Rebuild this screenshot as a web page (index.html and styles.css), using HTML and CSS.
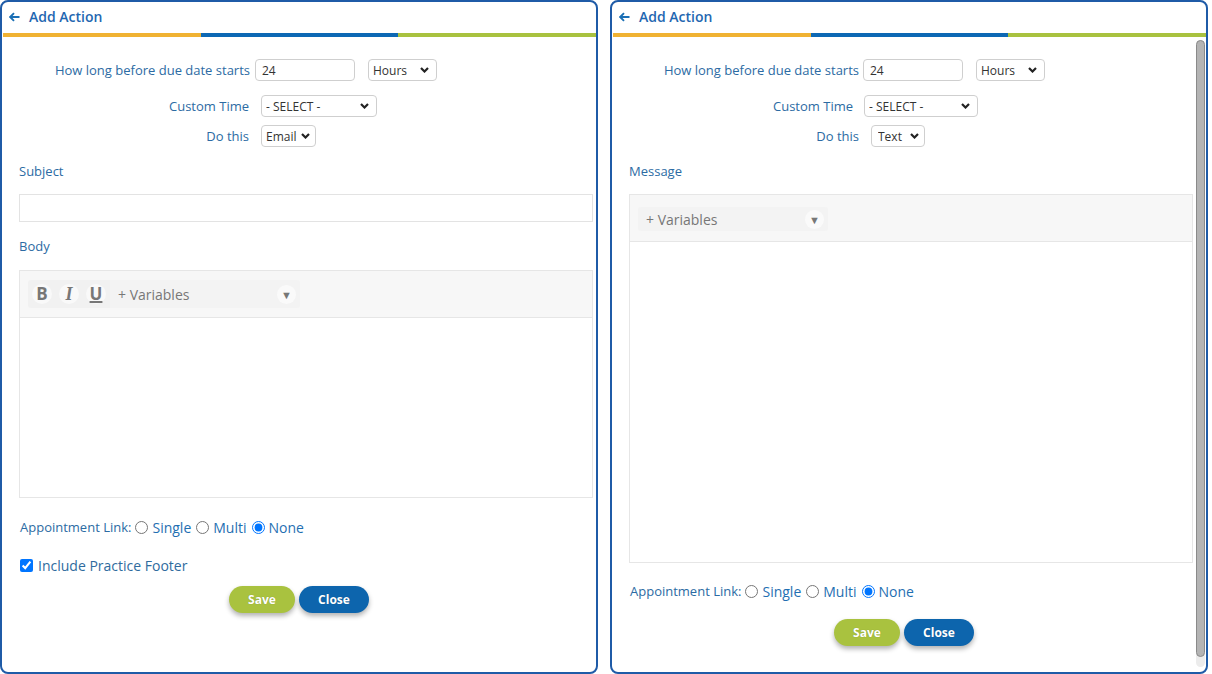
FILE: index.html
```html
<!DOCTYPE html>
<html>
<head>
	<meta charset="utf-8">
	<title>Add Action</title>
	<link rel="stylesheet" href="styles.css">
</head>
<body>
	<div class="panel">
		<div class="panel-head">
			<svg class="back" width="11" height="10" viewBox="0 0 11 10"><path d="M10.5 5H1.5M5 1.2L1.2 5 5 8.8" fill="none" stroke="#1a6fb5" stroke-width="1.9"/></svg>
			<span>Add Action</span>
		</div>
		<div class="stripe"><span class="orange"></span><span class="blue"></span><span class="green"></span></div>
		<div class="panel-body">
			<div class="content">
				<div class="form">
					<div class="row row1">
						<label class="lbl">How long before due date starts</label>
						<input type="text" class="num" value="24">
						<select class="sel unit"><option>Hours</option></select>
					</div>
					<div class="row row2">
						<label class="lbl">Custom Time</label>
						<select class="sel custom"><option>- SELECT -</option></select>
					</div>
					<div class="row row3">
						<label class="lbl">Do this</label>
						<select class="sel action"><option>Email</option></select>
					</div>
					<div class="field-label">Subject</div>
					<input type="text" class="subject">
					<div class="field-label body-label">Body</div>
					<div class="editor email-editor">
						<div class="toolbar">
							<div class="fmt">
								<span class="fbtn b">B</span>
								<span class="fbtn i">I</span>
								<span class="fbtn u">U</span>
							</div>
							<div class="vars big"><span>+ Variables</span><span class="caret">&#9660;</span></div>
						</div>
						<div class="editor-area"></div>
					</div>
					<div class="link-row">
						<span class="link-lbl">Appointment Link:</span>
						<label class="opt"><input type="radio" name="l1">Single</label>
						<label class="opt"><input type="radio" name="l1">Multi</label>
						<label class="opt"><input type="radio" name="l1" checked>None</label>
					</div>
					<label class="footer-check"><input type="checkbox" checked>Include Practice Footer</label>
				</div>
				<div class="actions email-actions">
					<button class="btn save">Save</button>
					<button class="btn close">Close</button>
				</div>
			</div>
		</div>
	</div>

	<div class="panel text-panel">
		<div class="panel-head">
			<svg class="back" width="11" height="10" viewBox="0 0 11 10"><path d="M10.5 5H1.5M5 1.2L1.2 5 5 8.8" fill="none" stroke="#1a6fb5" stroke-width="1.9"/></svg>
			<span>Add Action</span>
		</div>
		<div class="stripe"><span class="orange"></span><span class="blue"></span><span class="green"></span></div>
		<div class="panel-body">
			<div class="content">
				<div class="form">
					<div class="row row1">
						<label class="lbl">How long before due date starts</label>
						<input type="text" class="num" value="24">
						<select class="sel unit"><option>Hours</option></select>
					</div>
					<div class="row row2">
						<label class="lbl">Custom Time</label>
						<select class="sel custom"><option>- SELECT -</option></select>
					</div>
					<div class="row row3">
						<label class="lbl">Do this</label>
						<select class="sel action text"><option>Text</option></select>
					</div>
					<div class="field-label">Message</div>
					<div class="editor text-editor">
						<div class="toolbar">
							<div class="vars"><span>+ Variables</span><span class="caret">&#9660;</span></div>
						</div>
						<div class="editor-area"></div>
					</div>
					<div class="link-row text-link">
						<span class="link-lbl">Appointment Link:</span>
						<label class="opt"><input type="radio" name="l2">Single</label>
						<label class="opt"><input type="radio" name="l2">Multi</label>
						<label class="opt"><input type="radio" name="l2" checked>None</label>
					</div>
				</div>
				<div class="actions text-actions">
					<button class="btn save">Save</button>
					<button class="btn close">Close</button>
				</div>
			</div>
			<div class="scrollbar"><div class="thumb"></div></div>
		</div>
	</div>
</body>
</html>
```

FILE: styles.css
```css
*{box-sizing: border-box;}
body{margin: 0;height: 674px;overflow: hidden;display: flex;gap: 12px;background-color: #fff;font-family: 'Open Sans', sans-serif;color: #2c6ba3;}
.panel{width: 598px;height: 674px;border: 2px solid #1f5ba7;border-radius: 8px;display: flex;flex-direction: column;overflow: hidden;background-color: #fff;}
.panel-head{height: 31px;display: flex;align-items: center;gap: 9px;padding: 0 0 2px 7px;font-size: 14px;font-weight: 600;color: #1f67b1;}
.back{display: block;}
.stripe{display: flex;height: 4px;margin-left: 1px;}
.stripe span{flex: 1;}
.orange{background-color: #f0b232;}
.blue{background-color: #0d68b4;}
.green{background-color: #a9c23f;}
.panel-body{flex: 1;display: flex;min-height: 0;}
.content{flex: 1;display: flex;flex-direction: column;}
.form{padding: 0 3px 0 17px;display: flex;flex-direction: column;}

.row{display: flex;align-items: center;font-size: 13px;}
.row1{margin-top: 22px;}
.row2{margin-top: 14px;}
.row3{margin-top: 8px;}
.lbl{text-align: right;white-space: nowrap;}
.row1 .lbl{width: 231px;margin-right: 5px;}
.row2 .lbl, .row3 .lbl{width: 230px;margin-right: 12px;}
.text-panel .row1 .lbl{width: 230px;margin-right: 4px;}
.text-panel .row2 .lbl{width: 224px;margin-right: 11px;}
.num, .sel{height: 22px;border: 1px solid #cfcfcf;border-radius: 4px;font-family: inherit;font-size: 12px;color: #333;background-color: #fff;outline: none;}
.num{width: 100px;padding: 0 6px;}
.sel{appearance: none;-webkit-appearance: none;padding: 0 18px 0 4px;background-image: url("data:image/svg+xml;utf8,<svg xmlns='http://www.w3.org/2000/svg' width='9' height='6'><path d='M1 1l3.5 3.5L8 1' fill='none' stroke='%23222' stroke-width='2.2'/></svg>");background-repeat: no-repeat;background-position: right 7px center;}
.unit{width: 69px;margin-left: 13px;}
.custom{width: 116px;}
.text-panel .custom{width: 114px;}
.action{width: 55px;padding-right: 14px;background-position: right 5px center;}
.action.text{width: 54px;padding-left: 6px;}

.field-label{margin-top: 15px;font-size: 13px;line-height: 18px;}
.body-label{margin-top: 15px;}
.subject{margin-top: 14px;height: 28px;width: 100%;border: 1px solid #e3e3e3;outline: none;}
.editor{margin-top: 14px;border: 1px solid #e6e6e6;display: flex;flex-direction: column;}
.email-editor{margin-top: 15px;height: 228px;}
.text-editor{height: 369px;}
.toolbar{height: 47px;flex: none;background-color: #f7f7f7;border-bottom: 1px solid #e6e6e6;display: flex;align-items: center;padding-left: 8px;}
.editor-area{flex: 1;background-color: #fff;}
.fmt{display: flex;gap: 7px;height: 28px;align-items: center;padding: 0 4px;background-color: #f1f1f1;border-radius: 3px 0 0 3px;}
.fbtn{width: 20px;height: 20px;border-radius: 50%;background-color: #f9f9f9;color: #777;font-size: 17px;line-height: 20px;text-align: center;}
.fbtn.b{font-weight: 700;}
.fbtn.i{font-family: 'Liberation Serif', serif;font-style: italic;font-weight: 700;font-size: 18px;}
.fbtn.u{font-weight: 700;text-decoration: underline;text-decoration-thickness: 2px;text-underline-offset: 1px;}
.vars{width: 190px;height: 24px;display: flex;align-items: center;justify-content: space-between;padding: 0 4px 0 8px;background-color: #f3f3f3;border-radius: 3px;font-size: 14px;color: #777;}
.text-editor .toolbar{padding-top: 2px;}
.vars.big{height: 28px;border-radius: 0 3px 3px 0;}
.caret{width: 19px;height: 19px;border-radius: 50%;background-color: #fafafa;font-size: 11px;line-height: 19px;text-align: center;color: #777;}

.link-row{margin-top: 19px;height: 20px;display: flex;align-items: center;font-size: 13px;padding-left: 1px;}
.text-link{margin-top: 18px;}
.opt{display: flex;align-items: center;font-size: 14px;color: #1f6fb2;}
.opt input{margin: 0 4px 0 4px;width: 13px;height: 13px;}
.opt + .opt input{margin-left: 5px;}
.footer-check{margin-top: 18px;height: 20px;display: flex;align-items: center;font-size: 14px;color: #2f6b9e;}
.footer-check input{margin: 0 5px 0 1px;width: 13px;height: 13px;}

.actions{display: flex;justify-content: center;gap: 4px;}
.email-actions{margin-top: 11px;}
.text-actions{margin-top: 18px;}
.btn{height: 27px;border: none;border-radius: 14px;color: #fff;font-family: inherit;font-size: 12px;font-weight: 700;box-shadow: 0 3px 5px rgba(0, 0, 0, 0.3);text-shadow: 0 0 1px rgba(0, 0, 0, 0.25);}
.save{width: 66px;background-color: #a9c23f;}
.close{width: 70px;background-color: #0d65ad;}

.scrollbar{width: 9px;flex: none;margin: 3px 1px 5px 0;background-color: #ececec;border-radius: 5px;}
.thumb{height: calc(100% - 10px);background-color: #b4b4b4;border: 1px solid #8a8a8a;border-radius: 5px;}
```
